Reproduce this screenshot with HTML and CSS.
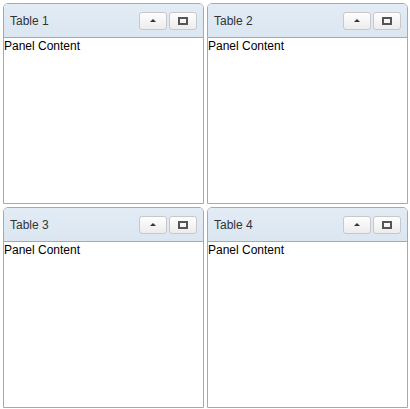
FILE: index.html
```html
<!DOCTYPE html>
<html>
<head>
<meta charset="utf-8">
<link rel="stylesheet" href="styles.css">
</head>
<body>
<div class="grid">
  <div class="panel">
    <div class="header">
      <span class="title">Table 1</span>
      <div class="tools">
        <button class="tool"><span class="tri"></span></button>
        <button class="tool"><span class="box"></span></button>
      </div>
    </div>
    <div class="content">Panel Content</div>
  </div>
  <div class="panel">
    <div class="header">
      <span class="title">Table 2</span>
      <div class="tools">
        <button class="tool"><span class="tri"></span></button>
        <button class="tool"><span class="box"></span></button>
      </div>
    </div>
    <div class="content">Panel Content</div>
  </div>
  <div class="panel">
    <div class="header">
      <span class="title">Table 3</span>
      <div class="tools">
        <button class="tool"><span class="tri"></span></button>
        <button class="tool"><span class="box"></span></button>
      </div>
    </div>
    <div class="content">Panel Content</div>
  </div>
  <div class="panel">
    <div class="header">
      <span class="title">Table 4</span>
      <div class="tools">
        <button class="tool"><span class="tri"></span></button>
        <button class="tool"><span class="box"></span></button>
      </div>
    </div>
    <div class="content">Panel Content</div>
  </div>
</div>
</body>
</html>
```
FILE: styles.css
```css
html, body {
  margin: 0;
  padding: 0;
  background: #ffffff;
}
.grid {
  display: grid;
  grid-template-columns: 201px 201px;
  grid-template-rows: 201px 201px;
  gap: 3px;
  padding: 3px;
}
.panel {
  display: flex;
  flex-direction: column;
  border: 1px solid #a9a9a9;
  border-radius: 5px 5px 0 0;
  overflow: hidden;
  background: #fff;
}
.header {
  height: 33px;
  flex: none;
  display: flex;
  align-items: center;
  justify-content: space-between;
  padding: 0 6px 0 6px;
  background: linear-gradient(#e3ecf5, #dbe6f1);
  border-bottom: 1px solid #a9a9a9;
}
.title {
  font-family: "Liberation Sans", Arial, sans-serif;
  font-size: 12px;
  color: #333;
}
.tools {
  display: flex;
  gap: 2px;
}
.tool {
  width: 28px;
  height: 18px;
  padding: 0;
  margin: 0;
  border: 1px solid #c8c8c8;
  border-radius: 3px;
  background: linear-gradient(#fefefe, #ececec);
  display: flex;
  align-items: center;
  justify-content: center;
}
.tri {
  width: 0;
  height: 0;
  border-left: 3px solid transparent;
  border-right: 3px solid transparent;
  border-bottom: 3px solid #333;
}
.box {
  width: 6px;
  height: 4px;
  border: 2px solid #555;
}
.content {
  flex: 1;
  font-family: "Liberation Sans", Arial, sans-serif;
  font-size: 12px;
  color: #000;
  padding: 1px 0 0 0;
}
```
